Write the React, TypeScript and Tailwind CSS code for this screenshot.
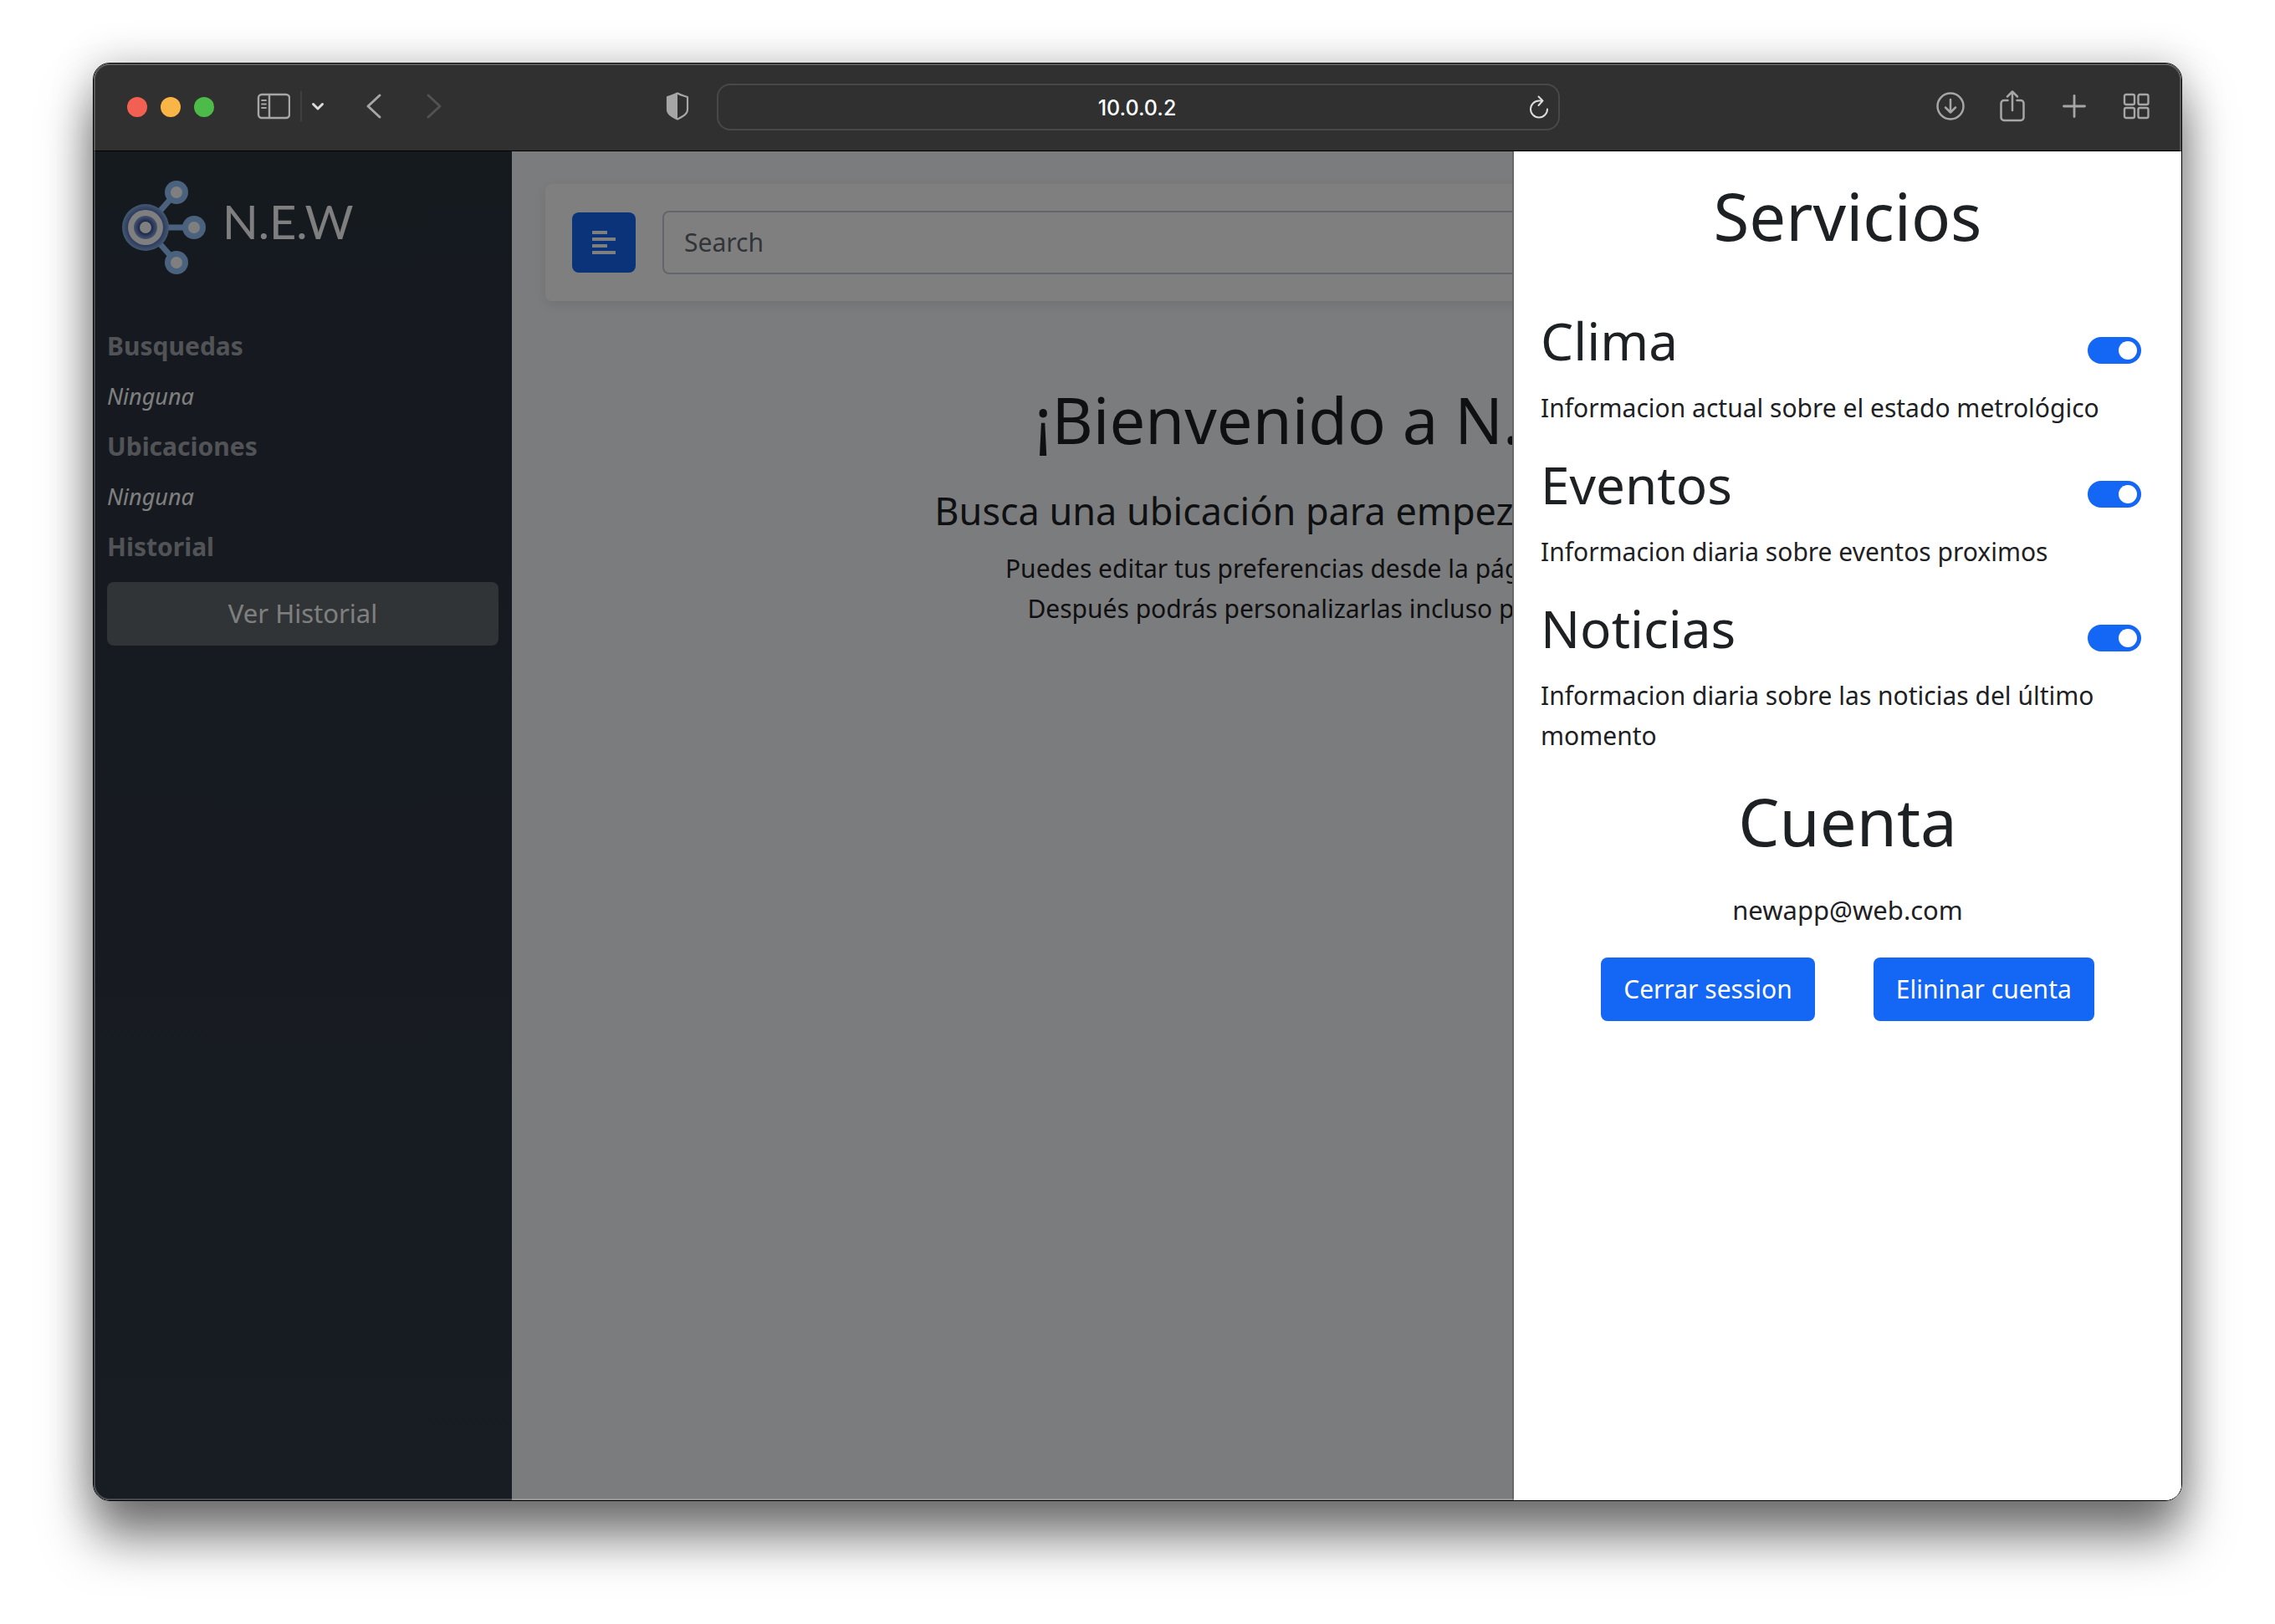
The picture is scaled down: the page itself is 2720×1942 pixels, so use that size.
import type { ReactNode } from "react";

const services = [
  { id: "clima", name: "Clima", text: "Informacion actual sobre el estado metrológico" },
  { id: "eventos", name: "Eventos", text: "Informacion diaria sobre eventos proximos" },
  { id: "noticias", name: "Noticias", text: "Informacion diaria sobre las noticias del último momento" },
];

function IconButton({ label, children }: { label: string; children: ReactNode }) {
  return (
    <button type="button" aria-label={label} className="flex items-center justify-center">
      {children}
    </button>
  );
}

function Toolbar() {
  return (
    <header className="flex h-[105px] shrink-0 items-center border-b border-black bg-[#303030] text-[#a6a6a6]">
      <div className="flex flex-1 items-center pl-10">
        <div className="flex gap-4">
          <button type="button" aria-label="Cerrar" className="size-6 rounded-full bg-[#f25f53]" />
          <button type="button" aria-label="Minimizar" className="size-6 rounded-full bg-[#f9b546]" />
          <button type="button" aria-label="Maximizar" className="size-6 rounded-full bg-[#4cbb48]" />
        </div>
        <div className="ml-[51px] flex items-center pb-0.5">
          <IconButton label="Barra lateral">
            <svg width="40" height="32" viewBox="0 0 40 32" fill="none" stroke="currentColor" strokeWidth="2.400">
              <rect x="2" y="2" width="37" height="28" rx="4" />
              <path d="M15 2v28" />
              <path d="M6 9h5M6 13.500h5M6 18h5" strokeWidth="1.800" strokeLinecap="round" />
            </svg>
          </IconButton>
          <span className="ml-3 h-9 w-0.5 bg-[#404040]" />
          <span className="ml-[11px]">
            <IconButton label="Grupos de pestañas">
              <svg width="16" height="12" viewBox="0 0 16 12" fill="none" stroke="#dcdcdc" strokeWidth="3" strokeLinecap="round" strokeLinejoin="round">
                <path d="M2.500 3.500L8 9l5.500-5.500" />
              </svg>
            </IconButton>
          </span>
        </div>
        <div className="ml-[49px] flex gap-[52px] pb-0.5">
          <IconButton label="Atrás">
            <svg width="20" height="32" viewBox="0 0 20 32" fill="none" stroke="currentColor" strokeWidth="3" strokeLinecap="round" strokeLinejoin="round">
              <path d="M17 3L3 16l14 13" />
            </svg>
          </IconButton>
          <IconButton label="Adelante">
            <svg width="20" height="32" viewBox="0 0 20 32" fill="none" stroke="#525252" strokeWidth="3" strokeLinecap="round" strokeLinejoin="round">
              <path d="M3 3l14 13L3 29" />
            </svg>
          </IconButton>
        </div>
        <span className="mr-[33px] ml-auto pb-0.5">
          <IconButton label="Informe de privacidad">
            <svg width="28" height="34" viewBox="0 0 28 34">
              <path d="M14 1.500C10 4 6 4.500 2 6v15c0 6 7 9 12 11.500C19 30 26 27 26 21V6c-4-1.500-8-2-12-4.500z" fill="none" stroke="currentColor" strokeWidth="2.200" strokeLinejoin="round" />
              <path d="M14 1.500C10 4 6 4.500 2 6v15c0 6 7 9 12 11.500z" fill="currentColor" />
            </svg>
          </IconButton>
        </span>
      </div>
      <div className="flex h-14 w-[1008px] items-center rounded-2xl border-2 border-[#484848] pr-[11px] pl-8">
        <input
          aria-label="Dirección"
          defaultValue="10.0.0.2"
          className="min-w-0 flex-1 bg-transparent pt-0.5 text-center font-['Inter',sans-serif] text-[25px] font-medium text-white outline-none"
        />
        <IconButton label="Recargar">
          <svg width="24" height="28" viewBox="0 0 24 28" fill="none" stroke="#dcdcdc" strokeWidth="2" strokeLinecap="round" strokeLinejoin="round">
            <path d="M22 16.500A10 10 0 1 1 12 6.500h4.500M11.500 1.500l5 5-5 5.500" />
          </svg>
        </IconButton>
      </div>
      <div className="flex flex-1 items-center justify-end gap-[41px] pr-[38px] pb-0.5">
        <IconButton label="Descargas">
          <svg width="34" height="34" viewBox="0 0 34 34" fill="none" stroke="currentColor" strokeWidth="2.500" strokeLinecap="round" strokeLinejoin="round">
            <circle cx="17" cy="17" r="15.500" />
            <path d="M17 9v15.500M11 18.500l6 6 6-6" />
          </svg>
        </IconButton>
        <IconButton label="Compartir">
          <svg width="32" height="40" viewBox="0 0 32 40" fill="none" stroke="currentColor" strokeWidth="2.500" strokeLinecap="round" strokeLinejoin="round">
            <path d="M10.500 13H6a3.500 3.500 0 0 0-3.500 3.500v17A3.500 3.500 0 0 0 6 37h20a3.500 3.500 0 0 0 3.500-3.500v-17A3.500 3.500 0 0 0 26 13h-4.500M16 25V2.500M10 8.500l6-6 6 6" />
          </svg>
        </IconButton>
        <IconButton label="Nueva pestaña">
          <svg width="34" height="34" viewBox="0 0 34 34" fill="none" stroke="currentColor" strokeWidth="2.800" strokeLinecap="round">
            <path d="M17 4.500v25M4.500 17h25" />
          </svg>
        </IconButton>
        <IconButton label="Vista de pestañas">
          <svg width="32" height="32" viewBox="0 0 32 32" fill="none" stroke="currentColor" strokeWidth="2.400">
            <rect x="2" y="2" width="12" height="12" rx="2" />
            <rect x="18.500" y="2" width="12" height="12" rx="2" />
            <rect x="2" y="18" width="12" height="12" rx="2" />
            <rect x="18.500" y="18" width="12" height="12" rx="2" />
          </svg>
        </IconButton>
      </div>
    </header>
  );
}

function Logo() {
  return (
    <svg width="102" height="114" viewBox="0 0 102 114" aria-hidden="true">
      <defs>
        <radialGradient id="hub">
          <stop offset="0.700" stopColor="#5468b4" />
          <stop offset="1" stopColor="#86b2e2" />
        </radialGradient>
        <radialGradient id="core">
          <stop offset="0.450" stopColor="#34428c" />
          <stop offset="1" stopColor="#86aade" />
        </radialGradient>
      </defs>
      <path d="M29 57L66 15M29 57h58M29 57l37 42" stroke="#94c4fc" strokeWidth="7" />
      <g fill="#94c4fc">
        <circle cx="66" cy="15" r="14" />
        <circle cx="87" cy="57" r="14" />
        <circle cx="66" cy="99" r="14" />
      </g>
      <circle cx="29" cy="57" r="28" fill="url(#hub)" />
      <circle cx="29" cy="57" r="21" fill="#fff" />
      <circle cx="29" cy="57" r="14" fill="url(#core)" />
      <g fill="#fff">
        <circle cx="29" cy="57" r="7" />
        <circle cx="66" cy="15" r="7" />
        <circle cx="87" cy="57" r="7" />
        <circle cx="66" cy="99" r="7" />
      </g>
    </svg>
  );
}

function Sidebar() {
  return (
    <aside className="flex w-[500px] shrink-0 flex-col bg-linear-to-b from-[#2b343f] to-[#303846] px-4 pt-[34px]">
      <div className="flex h-[114px] gap-[19px] pl-[17px]">
        <Logo />
        <span className="pt-3 font-['Lato',sans-serif] text-[56px] leading-[76px] text-white">N.E.W</span>
      </div>
      <h2 className="mt-[61px] font-bold text-[#a2a6ae]">Busquedas</h2>
      <p className="mt-3.5 text-[27px] leading-11 text-white italic">Ninguna</p>
      <h2 className="mt-3.5 font-bold text-[#a2a6ae]">Ubicaciones</h2>
      <p className="mt-3.5 text-[27px] leading-11 text-white italic">Ninguna</p>
      <h2 className="mt-3.5 font-bold text-[#a2a6ae]">Historial</h2>
      <button type="button" className="mt-[18px] h-19 rounded-lg bg-[#60686e] pb-0.5 text-[31px] text-white">
        Ver Historial
      </button>
    </aside>
  );
}

function Main() {
  return (
    <main className="min-w-0 flex-1 bg-[#f7f9fc] p-10 pt-[39px]">
      <div className="flex items-center gap-8 rounded-lg bg-white p-8 shadow-[0_4px_16px_rgba(0,0,0,0.1)]">
        <button type="button" aria-label="Menú" className="flex h-18 w-19 shrink-0 items-center justify-center rounded-lg bg-[#1466f5]">
          <svg width="28" height="28" viewBox="0 0 28 28" fill="#fff" aria-hidden="true">
            <rect width="18" height="4" rx="0.500" />
            <rect y="8" width="28" height="4" rx="0.500" />
            <rect y="16" width="18" height="4" rx="0.500" />
            <rect y="24" width="28" height="4" rx="0.500" />
          </svg>
        </button>
        <input
          type="search"
          aria-label="Search"
          placeholder="Search"
          className="h-19 min-w-0 flex-1 rounded-lg border-2 border-[#c4ccd4] bg-white px-6 pb-0.5 outline-none placeholder:text-[#626a71]"
        />
      </div>
      <div className="mt-[94px] flex flex-col items-center text-center">
        <h1 className="text-[76px] leading-24">¡Bienvenido a N.E.W.!</h1>
        <h3 className="mt-8 text-[45px] leading-[58px]">Busca una ubicación para empezar a descubrir</h3>
        <p className="mt-4">Puedes editar tus preferencias desde la página de usuario</p>
        <p>Después podrás personalizarlas incluso por ubicación.</p>
      </div>
    </main>
  );
}

function ServicesPanel() {
  return (
    <section
      role="dialog"
      aria-label="Servicios"
      className="absolute inset-y-0 right-0 flex w-[800px] flex-col border-l-2 border-[#666] bg-white bg-clip-padding px-8 pt-[29px]"
    >
      <h1 className="mb-[62px] text-center text-[78px] leading-24">Servicios</h1>
      <div className="flex flex-col gap-7">
        {services.map((service) => (
          <div key={service.id}>
            <div className="mb-[18px] flex items-end justify-between pr-4">
              <label htmlFor={service.id} className="text-[62px] leading-[78px]">
                {service.name}
              </label>
              <input
                id={service.id}
                type="checkbox"
                role="switch"
                defaultChecked
                className="mb-[11px] flex h-8 w-16 appearance-none items-center rounded-full bg-[#1466f5] px-[5px] before:size-[22px] before:rounded-full before:bg-white checked:justify-end"
              />
            </div>
            <p>{service.text}</p>
          </div>
        ))}
      </div>
      <h1 className="mt-[30px] text-center text-[78px] leading-24">Cuenta</h1>
      <p className="mt-[34px] text-center text-[31px]">newapp@web.com</p>
      <div className="mt-[33px] flex justify-center gap-[70px]">
        <button type="button" className="h-19 rounded-lg bg-[#1466f5] px-[27px] text-white">
          Cerrar session
        </button>
        <button type="button" className="h-19 rounded-lg bg-[#1466f5] px-[27px] text-white">
          Elininar cuenta
        </button>
      </div>
    </section>
  );
}

export default function App() {
  return (
    <div className="flex min-h-screen flex-col bg-white px-[111px] pt-[75px] pb-[147px] font-['Noto_Sans',sans-serif] text-[30px] leading-12 text-[#1e2124]">
      <div className="relative flex flex-1 flex-col overflow-hidden rounded-[20px] border border-black shadow-[0_44px_60px_rgba(0,0,0,0.52),0_0_50px_rgba(0,0,0,0.22)]">
        <Toolbar />
        <div className="relative flex flex-1">
          <Sidebar />
          <Main />
          <div className="absolute inset-0 bg-black/50" />
          <ServicesPanel />
        </div>
        <div className="pointer-events-none absolute inset-0 rounded-[19px] border-2 border-white/20" />
      </div>
    </div>
  );
}
